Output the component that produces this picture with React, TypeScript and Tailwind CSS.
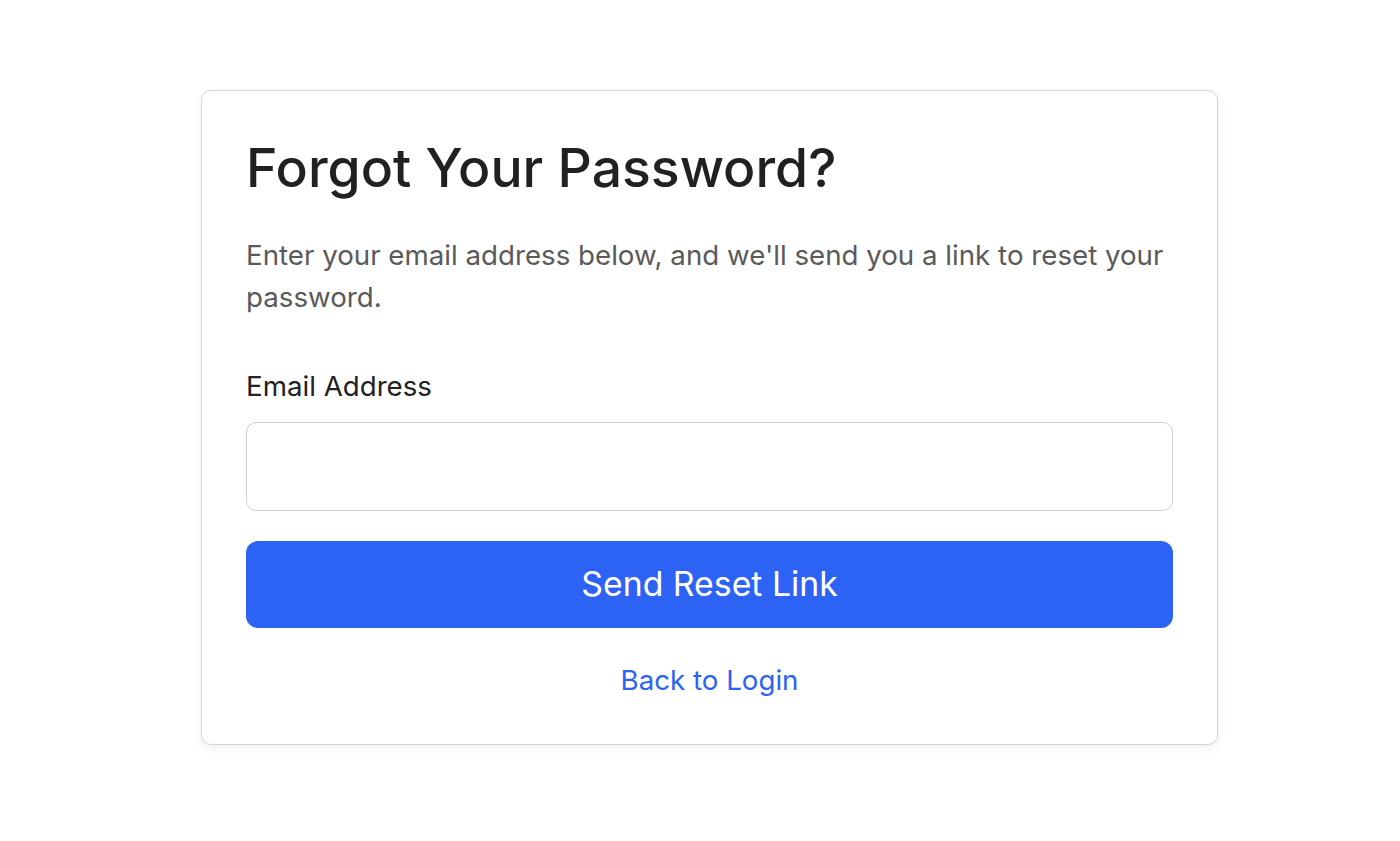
import React from "react";

export default function App() {
  return (
    <div className="min-h-[841px] w-full bg-white pt-[90px] pl-[201px]" style={{ fontFamily: "Inter, 'Noto Sans', sans-serif" }}>
      <div className="w-[1017px] rounded-[10px] border border-[#d4d4d4] bg-white px-[44px] pt-[45px] pb-[45px] shadow-[0_4px_10px_rgba(0,0,0,0.06)]">
        <h1 className="text-[53.5px] font-medium leading-[64px] text-[#212121]">Forgot Your Password?</h1>
        <p className="mt-[34px] text-[27.7px] leading-[42px] text-[#5a5a5a]">
          Enter your email address below, and we'll send you a link to reset your password.
        </p>
        <label className="mt-[49px] block text-[27.7px] leading-[38px] text-[#212121]">Email Address</label>
        <input
          type="email"
          className="mt-[17px] block h-[89px] w-full rounded-[10px] border border-[#cfcfcf] bg-white px-4 text-[27px] outline-none"
        />
        <button className="mt-[30px] flex h-[87px] w-full items-center justify-center rounded-[12px] bg-[#2d63f4] text-[33.8px] text-white">
          Send Reset Link
        </button>
        <div className="mt-[33px] text-center">
          <a href="#" className="block text-[27.7px] leading-[38px] text-[#2d63f4]">Back to Login</a>
        </div>
      </div>
    </div>
  );
}
